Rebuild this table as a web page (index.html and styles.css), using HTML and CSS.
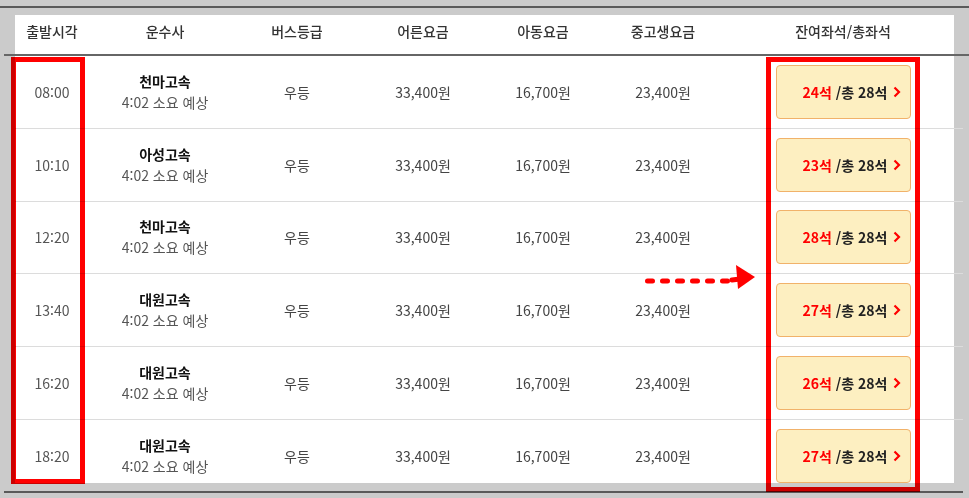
FILE: index.html
```html
<!DOCTYPE html>
<html lang="ko">
<head>
    <meta charset="UTF-8">
    <meta name="viewport" content="width=device-width, initial-scale=1.0">
    <title>배차 조회</title>
    <link rel="stylesheet" href="styles.css">
</head>
<body>

    <div class="screen">
        <div class="top-line"></div>

        <div class="table">
            <div class="thead">
                <div>출발시각</div>
                <div>운수사</div>
                <div>버스등급</div>
                <div>어른요금</div>
                <div>아동요금</div>
                <div>중고생요금</div>
                <div>잔여좌석/총좌석</div>
            </div>

            <div class="tbody">
                <div class="row">
                    <div class="time">08:00</div>
                    <div class="company"><b>천마고속</b><span>4:02 소요 예상</span></div>
                    <div>우등</div>
                    <div>33,400원</div>
                    <div>16,700원</div>
                    <div>23,400원</div>
                    <div><button class="seat"><em>24석</em>&nbsp;/총 28석 <svg width="10" height="14" viewBox="0 0 10 14"><path d="M2.5 2.5 L7 7 L2.5 11.5" fill="none" stroke="#f00" stroke-width="2.2"/></svg></button></div>
                </div>
                <div class="row">
                    <div class="time">10:10</div>
                    <div class="company"><b>아성고속</b><span>4:02 소요 예상</span></div>
                    <div>우등</div>
                    <div>33,400원</div>
                    <div>16,700원</div>
                    <div>23,400원</div>
                    <div><button class="seat"><em>23석</em>&nbsp;/총 28석 <svg width="10" height="14" viewBox="0 0 10 14"><path d="M2.5 2.5 L7 7 L2.5 11.5" fill="none" stroke="#f00" stroke-width="2.2"/></svg></button></div>
                </div>
                <div class="row">
                    <div class="time">12:20</div>
                    <div class="company"><b>천마고속</b><span>4:02 소요 예상</span></div>
                    <div>우등</div>
                    <div>33,400원</div>
                    <div>16,700원</div>
                    <div>23,400원</div>
                    <div><button class="seat"><em>28석</em>&nbsp;/총 28석 <svg width="10" height="14" viewBox="0 0 10 14"><path d="M2.5 2.5 L7 7 L2.5 11.5" fill="none" stroke="#f00" stroke-width="2.2"/></svg></button></div>
                </div>
                <div class="row">
                    <div class="time">13:40</div>
                    <div class="company"><b>대원고속</b><span>4:02 소요 예상</span></div>
                    <div>우등</div>
                    <div>33,400원</div>
                    <div>16,700원</div>
                    <div>23,400원</div>
                    <div><button class="seat"><em>27석</em>&nbsp;/총 28석 <svg width="10" height="14" viewBox="0 0 10 14"><path d="M2.5 2.5 L7 7 L2.5 11.5" fill="none" stroke="#f00" stroke-width="2.2"/></svg></button></div>
                </div>
                <div class="row">
                    <div class="time">16:20</div>
                    <div class="company"><b>대원고속</b><span>4:02 소요 예상</span></div>
                    <div>우등</div>
                    <div>33,400원</div>
                    <div>16,700원</div>
                    <div>23,400원</div>
                    <div><button class="seat"><em>26석</em>&nbsp;/총 28석 <svg width="10" height="14" viewBox="0 0 10 14"><path d="M2.5 2.5 L7 7 L2.5 11.5" fill="none" stroke="#f00" stroke-width="2.2"/></svg></button></div>
                </div>
                <div class="row">
                    <div class="time">18:20</div>
                    <div class="company"><b>대원고속</b><span>4:02 소요 예상</span></div>
                    <div>우등</div>
                    <div>33,400원</div>
                    <div>16,700원</div>
                    <div>23,400원</div>
                    <div><button class="seat"><em>27석</em>&nbsp;/총 28석 <svg width="10" height="14" viewBox="0 0 10 14"><path d="M2.5 2.5 L7 7 L2.5 11.5" fill="none" stroke="#f00" stroke-width="2.2"/></svg></button></div>
                </div>
            </div>
        </div>

        <div class="bottom-line"></div>

        <!-- highlight marks drawn over the table -->
        <div class="mark mark-time"></div>
        <div class="mark mark-seat"></div>
        <svg class="arrow" width="120" height="34" viewBox="0 0 120 34">
            <line x1="7.5" y1="21" x2="92" y2="21" stroke="#f00" stroke-width="5" stroke-linecap="round" stroke-dasharray="5 10"/>
            <line x1="92" y1="20" x2="100" y2="19" stroke="#f00" stroke-width="5" stroke-linecap="round"/>
            <polygon points="96,5 115,17 98,29" fill="#f00"/>
        </svg>
    </div>

</body>
</html>
```

FILE: styles.css
```css
body {
    margin: 0;
    background: #cbcbcb;
    font-family: "Noto Sans CJK KR", "Noto Sans", sans-serif;
    font-size: 14px;
    color: #444;
}
.screen {
    position: relative;
    width: 969px;
    height: 498px;
    overflow: hidden;
}
.top-line {
    height: 2px;
    margin-top: 6px;
    background: #5a5a5a;
}
.table {
    margin: 7px 6px 0 4px;
    padding-left: 11px;
    background: linear-gradient(to right, transparent 11px, #fff 11px, #fff 950px, transparent 950px);
}
.thead, .row {
    display: grid;
    grid-template-columns: 74px 152px 112px 140px 100px 140px 220px;
    text-align: center;
}
.thead {
    margin-left: -11px;
    margin-right: -6px;
    padding-left: 11px;
    padding-top: 6px;
    height: 33px;
    line-height: 20px;
    color: #333;
    font-weight: 500;
    border-bottom: 2px solid #666;
}
.tbody {
    height: 427px;
    overflow: hidden;
}
.row {
    height: 71.75px;
    align-items: center;
    margin-left: -11px;
    padding-left: 11px;
    border-bottom: 1px solid #dcdcdc;
}
.row .time {
    color: #555;
}
.company {
    display: flex;
    flex-direction: column;
    line-height: 21px;
}
.company b {
    color: #111;
    font-weight: 700;
}
.company span {
    color: #555;
}
.seat {
    display: inline-flex;
    align-items: center;
    justify-content: flex-end;
    width: 135px;
    height: 54px;
    padding: 0 8px 0 0;
    border: 1px solid #f1b26a;
    border-radius: 4px;
    background: #fdefc1;
    font-family: inherit;
    font-size: 14px;
    font-weight: 700;
    color: #222;
    vertical-align: middle;
}
.seat em {
    font-style: normal;
    color: #f00;
}
.seat svg {
    margin-left: 4px;
}
.bottom-line {
    height: 2px;
    margin: 8px 6px 0 4px;
    background: #5a5a5a;
}
.mark {
    position: absolute;
    border: 5px solid #f00;
    box-sizing: border-box;
    mix-blend-mode: multiply;
}
.mark-time {
    left: 11px;
    top: 57px;
    width: 74px;
    height: 427px;
}
.mark-seat {
    left: 766px;
    top: 57px;
    width: 154px;
    height: 435px;
}
.arrow {
    position: absolute;
    left: 640px;
    top: 260px;
}
```
